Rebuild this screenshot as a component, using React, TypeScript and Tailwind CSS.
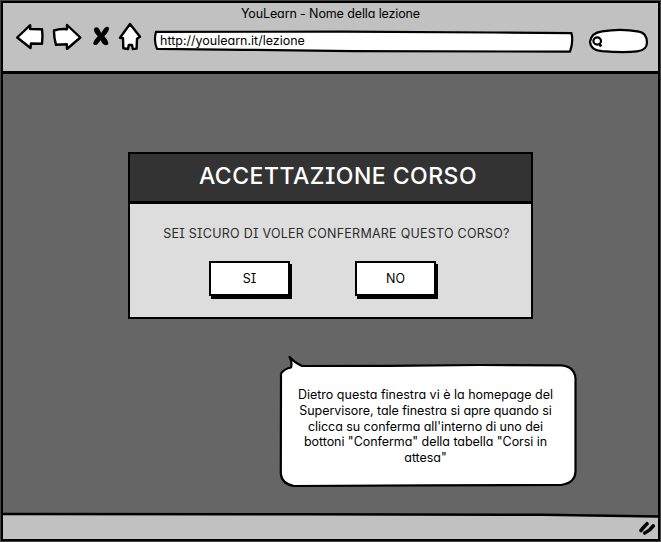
import React from "react";

const font = "font-['Inter','Noto_Sans',sans-serif] [font-feature-settings:'cv11','calt'_0]";
const caps = "[font-feature-settings:'cv11','cv08']";

function Arrow({ d, className }: { d: string; className: string }) {
  return (
    <svg className={className} viewBox="0 0 30 28" width="30" height="28" fill="#fff" stroke="#000" strokeWidth="2.4" strokeLinejoin="round">
      <path d={d} />
    </svg>
  );
}

function Toolbar() {
  return (
    <div className="flex h-[34px] items-start">
      <Arrow className="ml-[12px] mt-0 shrink-0" d="M2.2 15.5 L15.2 3.2 L15.2 7 L27 7.2 Q28 14 27 21.8 L16 21.5 L15.5 26 Z" />
      <Arrow className="ml-[7px] mt-0 shrink-0" d="M2 8.5 Q8 6.5 15 7.2 L15 3 L28.3 15.5 L15 27 L14.8 22.2 L4 22.8 Q1.8 15 2 8.5 Z" />
      <svg className="ml-[10px] mt-[3px] shrink-0" width="18" height="22" viewBox="0 0 18 22" fill="#000">
        <path d="M2.2 3.2 Q5.5 .8 7.3 4.2 L9.2 8 L12.3 3.2 Q15.5 .5 17 2.8 Q17.5 6 12.3 11.2 Q17 16.5 16.2 19.2 Q13.5 21.5 10.5 18.5 L8.6 15.2 L5.5 19.2 Q2.5 21.2 1.2 18.7 Q1.2 15.8 5.8 11.2 Q1 6.5 2.2 3.2 Z" />
      </svg>
      <svg className="ml-[8px] mt-0 shrink-0" width="24" height="29" viewBox="0 0 24 29" fill="#fff" stroke="#000" strokeWidth="2.4" strokeLinejoin="round">
        <path d="M12 2 L22 14.8 L19 16.8 L18.6 26.6 L14.8 27 L14 23 L10.8 23 L10 27 L5.3 26.2 L5 16.2 L2 15.8 Z" />
      </svg>
      <div className="relative ml-[11px] mt-[7px] flex h-[24px] w-[421px] shrink-0 items-center">
        <svg className="absolute inset-0" width="421" height="24" viewBox="0 0 421 24" fill="#fff" stroke="#000" strokeWidth="2.2" strokeLinejoin="round">
          <path d="M3 2.8 L190 2.7 L340 3.5 L418.5 4.2 Q420.5 13 417 22.6 L200 22.2 L90 20.8 L4 19.9 Q.5 12 3 2.8 Z" />
        </svg>
        <span className="relative ml-[7px] whitespace-nowrap text-[12.5px] leading-4">http://youlearn.it/lezione</span>
      </div>
      <svg className="ml-[14px] mt-[6px] shrink-0" width="62" height="26" viewBox="0 0 62 26" fill="#fff" stroke="#000" strokeWidth="2.2">
        <path d="M14 3.4 Q33 .2 51 3.7 Q58.5 4.7 59 14.5 Q59 22.2 49 23.4 Q36 25 14 23.2 Q2.5 22 2 13.7 Q3 5 14 3.4 Z" />
        <ellipse cx="9.2" cy="13" rx="3.8" ry="3.6" />
        <path d="M11.5 16 L13.2 18.5" strokeWidth="2.8" />
      </svg>
    </div>
  );
}

function SketchButton({ label }: { label: string }) {
  return (
    <button className="h-[35px] w-[81px] border-2 border-black bg-white pt-[2px] text-[12.5px] shadow-[2px_3px_0_#000]">
      <span className={caps}>{label}</span>
    </button>
  );
}

function Dialog() {
  return (
    <section className="ml-[125px] mt-[78px] h-[167px] w-[405px] border-2 border-black bg-[#dddddd]">
      <h1 className={`h-[50px] border-b-[3px] border-black bg-[#333333] pl-[15px] text-center text-[23px] font-medium leading-[45px] tracking-[0.48px] text-white ${caps}`}>
        ACCETTAZIONE CORSO
      </h1>
      <p className={`mt-[20px] whitespace-nowrap pl-[12px] text-center text-[12.5px] leading-5 tracking-[0.25px] text-[#2b2b2b] ${caps}`}>
        SEI SICURO DI VOLER CONFERMARE QUESTO CORSO?
      </p>
      <div className="ml-[79px] mt-[17px] flex gap-[65px]">
        <SketchButton label="SI" />
        <SketchButton label="NO" />
      </div>
    </section>
  );
}

const note = [
  "Dietro questa finestra vi è la homepage del",
  "Supervisore, tale finestra si apre quando si",
  "clicca su conferma all'interno di uno dei",
  'bottoni "Conferma" della tabella "Corsi in',
  'attesa"',
];

function Note() {
  return (
    <aside className="relative ml-[276px] mt-[36px] h-[134px] w-[298px] pt-[32px]">
      <svg className="absolute inset-0" width="298" height="134" viewBox="0 0 298 134" fill="#fff" stroke="#000" strokeWidth="2.2" strokeLinejoin="round">
        <path d="M12 12.5 Q5 14 2 18.5 L1.8 119 Q3 129 15 131 L150 130.4 L282 130 Q297 128 296.5 115 L296.5 23 Q295 11 282 10.3 L200 10 L110 10.8 L23 11 Q16 8 10.5 2 Q13.5 7 12 12.5 Z" />
      </svg>
      <div className="relative ml-[-5px] text-center text-[12.5px] leading-[15.8px] tracking-[-0.05px] first-line:tracking-normal">
        {note.map((line) => (
          <p key={line} className="whitespace-nowrap first:tracking-[0.02px]">{line}</p>
        ))}
      </div>
    </aside>
  );
}

export default function App() {
  return (
    <div className={`h-[542px] w-[661px] overflow-hidden bg-[#444] pl-px pt-px text-black ${font}`}>
      <div className="flex h-[540px] w-[659px] flex-col border-2 border-black bg-[#666666]">
        <header className="h-[71px] shrink-0 border-b-[3px] border-black bg-[#c1c1c1]">
          <div className="h-[19px] pt-[3px] text-center text-[12.5px] leading-4 tracking-[-0.12px]">YouLearn - Nome della lezione</div>
          <Toolbar />
        </header>
        <main className="min-h-0 flex-1">
          <Dialog />
          <Note />
        </main>
        <footer className="relative flex h-[26px] shrink-0 justify-end bg-[#c1c1c1]">
          <svg className="absolute left-0 top-[-1px]" width="655" height="7" viewBox="0 0 655 7">
            <path d="M0 0 H655 V4 L540 2 L0 2 Z" fill="#666" />
            <path d="M0 2 L300 2.2 L540 2.7 L655 4.5" fill="none" stroke="#000" strokeWidth="2.5" />
          </svg>
          <svg className="mr-[1px] mt-[7px]" width="18" height="17" viewBox="0 0 18 17" fill="none" stroke="#000" strokeWidth="3.6" strokeLinecap="round">
            <path d="M2 10.5 Q4 7.5 8 3.7 M5.8 13 Q11 10.5 14.2 6" />
          </svg>
        </footer>
      </div>
    </div>
  );
}
